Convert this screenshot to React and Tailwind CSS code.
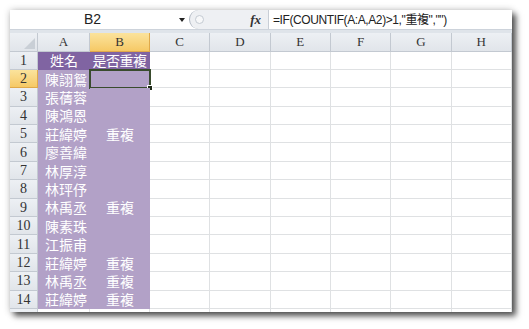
import React from "react";

const cols = ["C", "D", "E", "F", "G", "H"];

const rows = [
  ["陳詡鴛", ""],
  ["張蒨蓉", ""],
  ["陳鴻恩", ""],
  ["莊緯婷", "重複"],
  ["廖善緯", ""],
  ["林厚淳", ""],
  ["林玶伃", ""],
  ["林禹丞", "重複"],
  ["陳素珠", ""],
  ["江振甫", ""],
  ["莊緯婷", "重複"],
  ["林禹丞", "重複"],
  ["莊緯婷", "重複"],
];

const serif = { fontFamily: '"Liberation Serif", "Noto Sans CJK TC", serif' };
const cjk = { fontFamily: '"Noto Sans CJK TC", "Liberation Sans", sans-serif' };

const EmptyCells = () =>
  cols.map((c) => (
    <div key={c} className="flex-1 h-full border-r border-b border-[#dfe1e3] bg-white" />
  ));

const RowHead = ({ n, active }) => (
  <div
    className={`w-[28px] h-full shrink-0 flex items-center justify-center text-[14px] text-[#333] border-r border-b ${
      active
        ? "bg-gradient-to-b from-[#fbe39c] to-[#f6c965] border-[#e0a94a]"
        : "bg-gradient-to-b from-[#edf0f4] to-[#e1e5ea] border-[#c3c9d1]"
    }`}
    style={serif}
  >
    {n}
  </div>
);

export default function App() {
  return (
    <div className="w-[529px] h-[329px] bg-white pt-[10px] pl-[10px]">
      <div className="w-[502px] h-[302px] overflow-hidden bg-white shadow-[4px_4px_6px_rgba(0,0,0,0.65),0_0_7px_rgba(0,0,0,0.22)]">
        {/* formula bar */}
        <div className="h-[19px] flex items-stretch bg-white">
          <div className="w-[165px] flex items-center justify-center text-[14px] text-[#222]" style={{ fontFamily: '"Liberation Sans", sans-serif' }}>
            B2
          </div>
          <div className="w-[14px] flex items-center justify-center">
            <svg width="6" height="4" viewBox="0 0 6 4">
              <path d="M0 0 L6 0 L3 4 Z" fill="#222" />
            </svg>
          </div>
          <div className="w-[79px] relative flex items-center bg-[#eef0f3] rounded-l-full border-l border-[#aeb6c0]">
            <div className="ml-[5px] w-[9px] h-[9px] rounded-full border border-[#c4cad2] bg-[#f7f8f9]" />
            <span className="ml-auto mr-[7px] text-[13px] italic font-bold text-[#333]" style={serif}>
              fx
            </span>
          </div>
          <div
            className="flex-1 flex items-center pl-[4px] border-l border-[#c8ced6] text-[12px] tracking-[-0.4px] text-[#222] whitespace-nowrap"
            style={{ fontFamily: '"Liberation Sans", "Noto Sans CJK TC", sans-serif' }}
          >
            =IF(COUNTIF(A:A,A2)&gt;1,"重複","")
          </div>
        </div>
        <div className="h-[4px] bg-[#dfe4ea] border-t border-[#cdd3db]" />

        {/* column headers */}
        <div className="h-[18.5px] flex" style={serif}>
          <div className="w-[28px] h-full shrink-0 relative bg-gradient-to-b from-[#edf0f4] to-[#e1e5ea] border-r border-b border-[#c3c9d1]">
            <svg className="absolute right-[2px] bottom-[2px]" width="11" height="11" viewBox="0 0 11 11">
              <path d="M11 0 L11 11 L0 11 Z" fill="#c9cfd6" />
            </svg>
          </div>
          <div className="w-[52px] h-full shrink-0 flex items-center justify-center text-[13px] text-[#333] bg-gradient-to-b from-[#edf0f4] to-[#e1e5ea] border-r border-b border-[#c3c9d1]">
            A
          </div>
          <div className="w-[60px] h-full shrink-0 flex items-center justify-center text-[13px] text-[#333] bg-gradient-to-b from-[#fbe39c] to-[#f6c965] border-r border-b border-[#e0a94a]">
            B
          </div>
          {cols.map((c) => (
            <div
              key={c}
              className="flex-1 h-full flex items-center justify-center text-[13px] text-[#333] bg-gradient-to-b from-[#edf0f4] to-[#e1e5ea] border-r border-b border-[#c3c9d1]"
            >
              {c}
            </div>
          ))}
        </div>

        {/* row 1 */}
        <div className="h-[18.4px] flex">
          <RowHead n={1} />
          <div className="w-[52px] h-full shrink-0 flex items-center justify-center bg-[#8064a2] text-white text-[14px]" style={cjk}>
            姓名
          </div>
          <div className="w-[60px] h-full shrink-0 flex items-center justify-center bg-[#8064a2] text-white text-[14px] tracking-[-0.5px] whitespace-nowrap border-r border-[#8064a2]" style={cjk}>
            是否重複
          </div>
          <EmptyCells />
        </div>

        {rows.map(([name, dup], i) => (
          <div key={i} className="h-[18.4px] flex">
            <RowHead n={i + 2} active={i === 0} />
            <div className="w-[52px] h-full shrink-0 flex items-center pl-[7px] bg-[#b2a1c7] text-white text-[14px] whitespace-nowrap" style={cjk}>
              {name}
            </div>
            <div className="w-[60px] h-full shrink-0 relative flex items-center justify-center bg-[#b2a1c7] text-white text-[14px]" style={cjk}>
              {dup}
              {i === 0 && (
                <div className="absolute -left-[1px] -top-[1px] w-[62px] h-[20px] border-2 border-[#394b2d]">
                  <div className="absolute -right-[4px] -bottom-[4px] w-[6px] h-[6px] bg-[#1f2a18] border border-white" />
                </div>
              )}
            </div>
            <EmptyCells />
          </div>
        ))}

        {/* row 15, only a sliver visible */}
        <div className="h-[18.4px] flex">
          <div className="w-[28px] h-full shrink-0 bg-gradient-to-b from-[#edf0f4] to-[#e1e5ea] border-r border-b border-[#c3c9d1]" />
          <div className="w-[52px] h-full shrink-0 border-r border-b border-[#dfe1e3]" />
          <div className="w-[60px] h-full shrink-0 border-r border-b border-[#dfe1e3]" />
          <EmptyCells />
        </div>
      </div>
    </div>
  );
}
